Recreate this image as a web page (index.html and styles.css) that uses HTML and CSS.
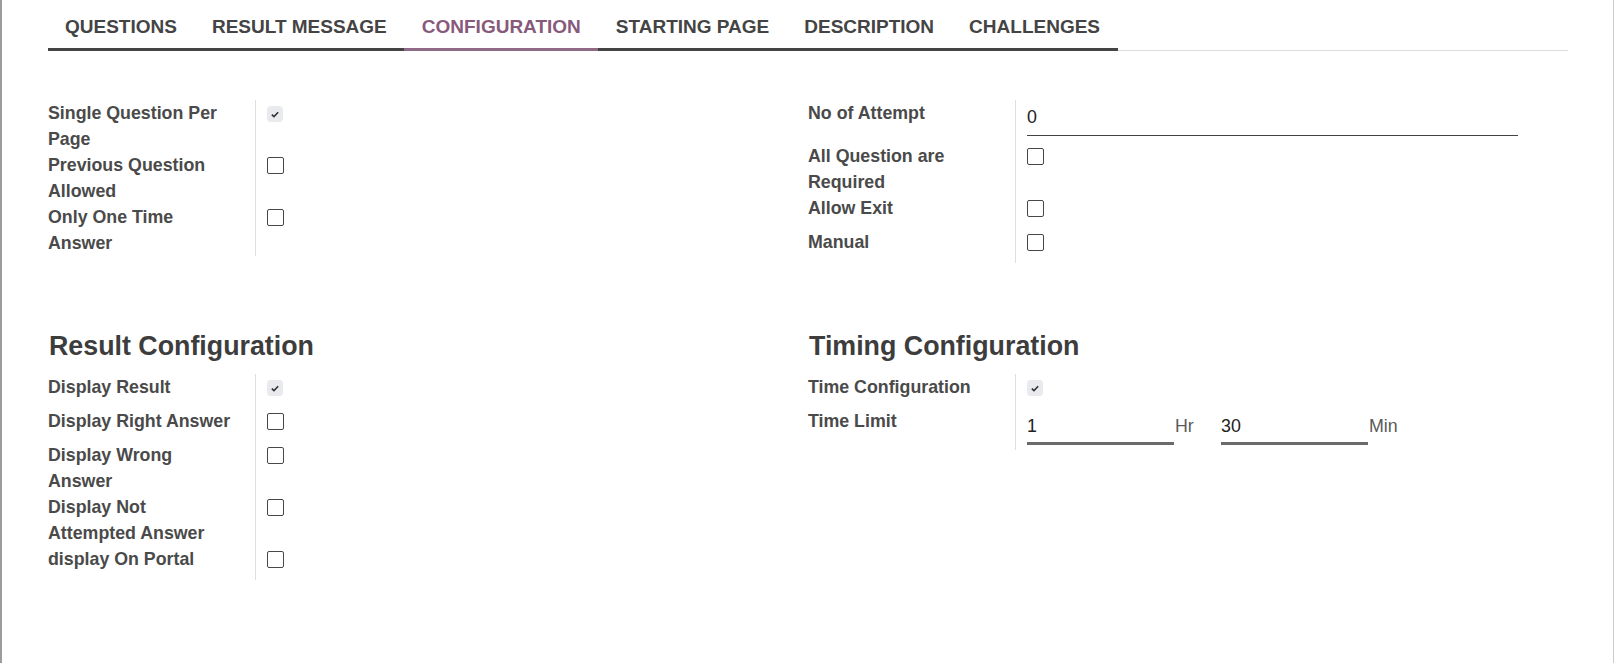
FILE: index.html
```html
<!DOCTYPE html>
<html lang="en">
<head>
<meta charset="utf-8">
<title>Quiz Configuration</title>
<link rel="stylesheet" href="styles.css">
</head>
<body>
<div class="frame">
  <div class="sheet">
    <nav class="tabs">
      <a class="tab">QUESTIONS</a>
      <a class="tab">RESULT MESSAGE</a>
      <a class="tab active">CONFIGURATION</a>
      <a class="tab">STARTING PAGE</a>
      <a class="tab">DESCRIPTION</a>
      <a class="tab">CHALLENGES</a>
    </nav>

    <div class="group-row first">
      <div class="group">
        <div class="fields">
          <div class="row">
            <div class="label">Single Question Per Page</div>
            <div class="cell"><span class="check on"><svg viewBox="0 0 10 8" width="8" height="7"><path d="M1 4.2 L3.7 6.6 L9 1.2" fill="none" stroke="#333" stroke-width="2"/></svg></span></div>
          </div>
          <div class="row">
            <div class="label">Previous Question Allowed</div>
            <div class="cell"><span class="check"></span></div>
          </div>
          <div class="row">
            <div class="label">Only One Time Answer</div>
            <div class="cell"><span class="check"></span></div>
          </div>
        </div>
      </div>
      <div class="group">
        <div class="fields">
          <div class="row">
            <div class="label">No of Attempt</div>
            <div class="cell"><div class="input wide">0</div></div>
          </div>
          <div class="row">
            <div class="label">All Question are Required</div>
            <div class="cell"><span class="check"></span></div>
          </div>
          <div class="row">
            <div class="label">Allow Exit</div>
            <div class="cell"><span class="check"></span></div>
          </div>
          <div class="row">
            <div class="label">Manual</div>
            <div class="cell"><span class="check"></span></div>
          </div>
        </div>
      </div>
    </div>

    <div class="group-row second">
      <div class="group">
        <h2 class="group-title">Result Configuration</h2>
        <div class="fields">
          <div class="row">
            <div class="label">Display Result</div>
            <div class="cell"><span class="check on"><svg viewBox="0 0 10 8" width="8" height="7"><path d="M1 4.2 L3.7 6.6 L9 1.2" fill="none" stroke="#333" stroke-width="2"/></svg></span></div>
          </div>
          <div class="row">
            <div class="label">Display Right Answer</div>
            <div class="cell"><span class="check"></span></div>
          </div>
          <div class="row">
            <div class="label">Display Wrong Answer</div>
            <div class="cell"><span class="check"></span></div>
          </div>
          <div class="row">
            <div class="label">Display Not Attempted Answer</div>
            <div class="cell"><span class="check"></span></div>
          </div>
          <div class="row">
            <div class="label">display On Portal</div>
            <div class="cell"><span class="check"></span></div>
          </div>
        </div>
      </div>
      <div class="group">
        <h2 class="group-title">Timing Configuration</h2>
        <div class="fields">
          <div class="row">
            <div class="label">Time Configuration</div>
            <div class="cell"><span class="check on"><svg viewBox="0 0 10 8" width="8" height="7"><path d="M1 4.2 L3.7 6.6 L9 1.2" fill="none" stroke="#333" stroke-width="2"/></svg></span></div>
          </div>
          <div class="row">
            <div class="label">Time Limit</div>
            <div class="cell time">
              <div class="input short">1</div><span class="unit">Hr</span>
              <div class="input short">30</div><span class="unit">Min</span>
            </div>
          </div>
        </div>
      </div>
    </div>
  </div>
</div>
</body>
</html>
```

FILE: styles.css
```css
html, body {
  margin: 0;
  padding: 0;
  background: #ffffff;
}

body {
  font-family: "Liberation Sans", Arial, sans-serif;
  color: #4a4a4a;
}

.frame {
  min-height: 663px;
  box-sizing: border-box;
  border-left: 2px solid #9c9c9c;
  border-right: 1px solid #cdc8d4;
}

.sheet {
  padding: 0 45px 0 46px;
}

/* Tabs */
.tabs {
  display: flex;
  border-bottom: 1px solid #dcdcdc;
}

.tab {
  display: block;
  padding: 16px 17.5px 10px;
  font-size: 19px;
  line-height: 22px;
  font-weight: 700;
  color: #444444;
  border-bottom: 3px solid #444444;
  margin-bottom: -1px;
}

.tab:first-child {
  padding-left: 17px;
}

.tab.active {
  color: #875a7b;
  border-bottom-color: #8f6a86;
}

/* Groups */
.group-row {
  display: flex;
}

.group-row.first {
  margin-top: 49px;
}

.group-row.second {
  margin-top: 67px;
}

.group {
  width: 760px;
}

.group-title {
  margin: 0 0 12px 1px;
  font-size: 26.8px;
  line-height: 32px;
  font-weight: 700;
  color: #3d3d3d;
}

.row {
  display: flex;
}

.label {
  width: 207px;
  box-sizing: border-box;
  padding-right: 20px;
  font-size: 17.8px;
  line-height: 26px;
  font-weight: 700;
  color: #4a4a4a;
}

.cell {
  flex: 1;
  border-left: 1px solid #dedede;
  padding: 5px 0 12px 11px;
  display: flex;
  align-items: flex-start;
}

/* Checkboxes */
.check {
  display: inline-flex;
  align-items: center;
  justify-content: center;
  width: 17px;
  height: 17px;
  box-sizing: border-box;
  border: 1px solid #474747;
  border-radius: 2px;
  background: #ffffff;
}

.check.on {
  border: none;
  border-radius: 4px;
  background: #e8eaed;
  width: 16px;
  height: 16px;
  margin-top: 1px;
}

/* Inputs */
.input {
  font-size: 17.8px;
  line-height: 26px;
  font-weight: 400;
  color: #222222;
  box-sizing: border-box;
}

.input.wide {
  width: 491px;
  margin: -1px 0 -5px 0;
  padding: 0 0 5px 0;
  border-bottom: 1px solid #444444;
}

.cell.time {
  padding-top: 5px;
  padding-bottom: 5px;
}

.input.short {
  width: 147px;
  padding: 0 0 3px 0;
  border-bottom: 3px solid #6a6a6a;
}

.unit {
  font-size: 17.8px;
  line-height: 26px;
  color: #5a5a5a;
  width: 46px;
  padding-left: 1px;
}
```
